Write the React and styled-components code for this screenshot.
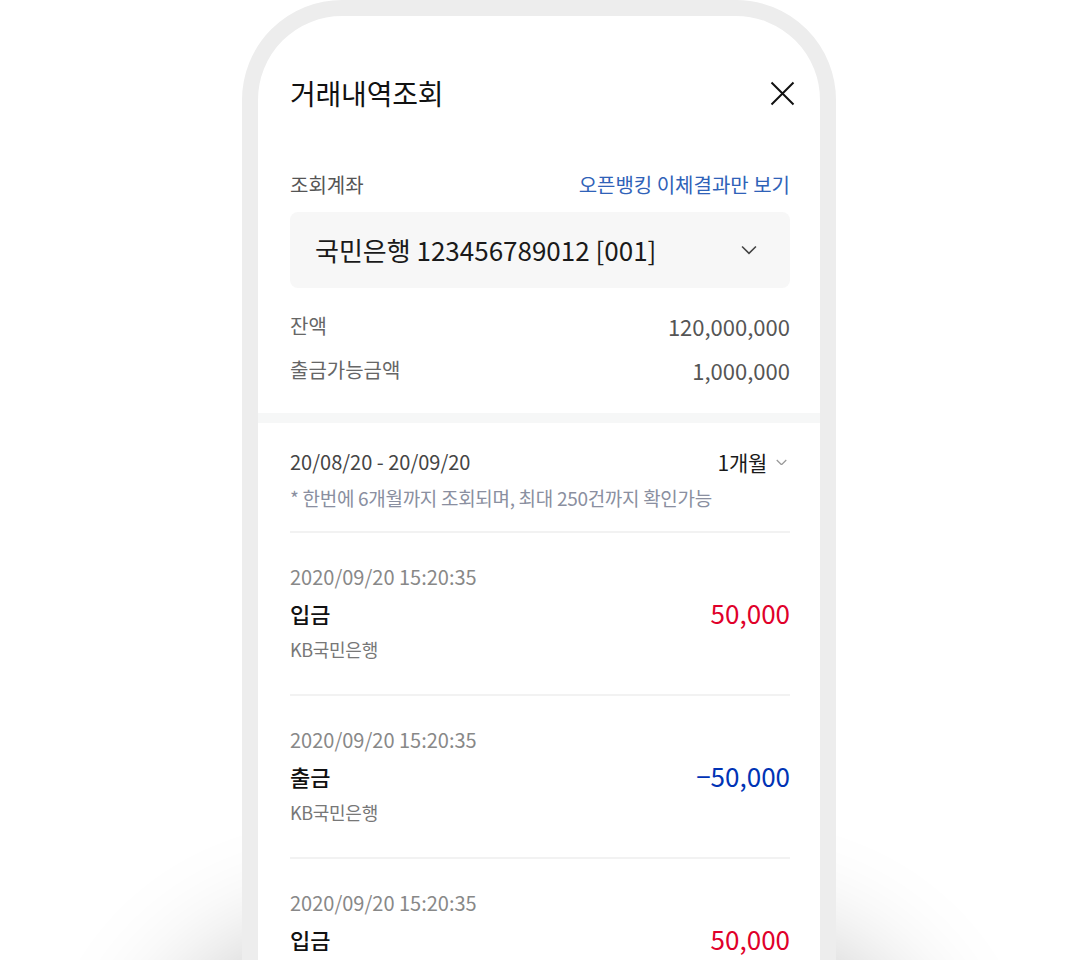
import React from "react";
import styled, { createGlobalStyle } from "styled-components";

const GlobalStyle = createGlobalStyle`
  html, body {
    margin: 0;
    padding: 0;
    height: 960px;
    overflow: hidden;
    background: #ffffff;
    font-family: "Noto Sans CJK KR", "Noto Sans", sans-serif;
  }
`;

const Page = styled.div`
  width: 1080px;
  height: 960px;
  overflow: hidden;
  display: flex;
  padding-left: 242px;
  box-sizing: border-box;
`;

const Phone = styled.div`
  width: 594px;
  height: 1300px;
  flex-shrink: 0;
  box-sizing: border-box;
  border: 16px solid #ededed;
  border-radius: 100px;
  background: #ffffff;
  overflow: hidden;
  box-shadow: 0 1030px 120px 95px rgba(0, 0, 0, 0.24);
`;

const Header = styled.div`
  display: flex;
  align-items: center;
  justify-content: space-between;
  padding: 58px 24px 0 32px;
  height: 38px;
`;

const Title = styled.h1`
  margin: 0;
  font-size: 28px;
  font-weight: 400;
  letter-spacing: -0.2px;
  line-height: 38px;
  color: #111;
`;

const CloseButton = styled.button`
  border: none;
  background: none;
  padding: 0;
  width: 28px;
  height: 28px;
  display: flex;
  align-items: center;
  justify-content: center;
`;

const Section = styled.div`
  padding: ${(p) => p.$pad || "0"};
  padding-left: 32px;
  padding-right: 30px;
`;

const LabelRow = styled.div`
  display: flex;
  justify-content: space-between;
  align-items: center;
  line-height: 28px;
`;

const Label = styled.span`
  font-size: 20px;
  color: #555;
`;

const LinkText = styled.a`
  font-size: 20px;
  color: #2f62b8;
  text-decoration: none;
`;

const Select = styled.div`
  margin-top: 13px;
  height: 76px;
  border-radius: 8px;
  background: #f7f7f7;
  display: flex;
  align-items: center;
  justify-content: space-between;
  padding: 0 33px 0 25px;
`;

const SelectText = styled.span`
  font-size: 26px;
  color: #1a1a1a;
  margin-top: -1px;
`;

const Balance = styled.div`
  margin-top: 20px;
  display: flex;
  flex-direction: column;
  gap: 8px;
`;

const BalanceRow = styled.div`
  display: flex;
  justify-content: space-between;
  align-items: center;
  line-height: 36px;
  font-size: 20px;
  color: #666;
`;

const BalanceValue = styled.span`
  font-size: 22px;
  color: #555;
`;

const Band = styled.div`
  height: 10px;
  background: #f6f7f7;
  margin-top: 25px;
`;

const PeriodRow = styled.div`
  display: flex;
  justify-content: space-between;
  align-items: center;
  line-height: 30px;
`;

const PeriodText = styled.span`
  font-size: 20px;
  color: #444;
`;

const PeriodPicker = styled.span`
  display: flex;
  align-items: center;
  gap: 9px;
  margin-right: 3px;
  font-size: 21px;
  color: #1a1a1a;
  letter-spacing: -0.3px;
`;

const Note = styled.div`
  margin-top: 6px;
  line-height: 30px;
  font-size: 19px;
  color: #8a8fa0;
  letter-spacing: -0.3px;
`;

const Divider = styled.div`
  height: 2px;
  background: #f2f2f2;
`;

const Item = styled.div`
  padding: 26px 0 27px;
  display: flex;
  flex-direction: column;
`;

const ItemDate = styled.div`
  line-height: 36px;
  font-size: 20px;
  color: #888;
`;

const ItemMain = styled.div`
  display: flex;
  justify-content: space-between;
  align-items: center;
  line-height: 36px;
`;

const ItemType = styled.span`
  font-size: 22px;
  font-weight: 500;
  color: #111;
`;

const Amount = styled.span`
  font-size: 26px;
  color: ${(p) => (p.$out ? "#0033b5" : "#e0002a")};
`;

const ItemBank = styled.div`
  line-height: 36px;
  font-size: 18px;
  color: #777;
  letter-spacing: -0.3px;
`;

const CloseIcon = () => (
  <svg width="25" height="25" viewBox="0 0 25 25">
    <path d="M1.5 1.5 L23.5 23.5 M23.5 1.5 L1.5 23.5" stroke="#111" strokeWidth="2" fill="none" />
  </svg>
);

const Chevron = ({ size = 16, color = "#333", width = 1.6 }) => (
  <svg width={size} height={size * 0.62} viewBox="0 0 16 10">
    <path d="M1 1.5 L8 8.5 L15 1.5" stroke={color} strokeWidth={width} fill="none" />
  </svg>
);

const transactions = [
  { date: "2020/09/20 15:20:35", type: "입금", amount: "50,000", bank: "KB국민은행" },
  { date: "2020/09/20 15:20:35", type: "출금", amount: "−50,000", bank: "KB국민은행", out: true },
  { date: "2020/09/20 15:20:35", type: "입금", amount: "50,000", bank: "KB국민은행" },
];

const App = () => {
  return (
    <Page>
      <GlobalStyle />
      <Phone>
        <Header>
          <Title>거래내역조회</Title>
          <CloseButton>
            <CloseIcon />
          </CloseButton>
        </Header>

        <Section $pad="59px 0 0">
          <LabelRow>
            <Label>조회계좌</Label>
            <LinkText>오픈뱅킹 이체결과만 보기</LinkText>
          </LabelRow>
          <Select>
            <SelectText>국민은행 123456789012 [001]</SelectText>
            <Chevron size={16} color="#444" width={1.6} />
          </Select>
          <Balance>
            <BalanceRow>
              <span>잔액</span>
              <BalanceValue>120,000,000</BalanceValue>
            </BalanceRow>
            <BalanceRow>
              <span>출금가능금액</span>
              <BalanceValue>1,000,000</BalanceValue>
            </BalanceRow>
          </Balance>
        </Section>

        <Band />

        <Section $pad="24px 0 18px">
          <PeriodRow>
            <PeriodText>20/08/20 - 20/09/20</PeriodText>
            <PeriodPicker>
              1개월
              <Chevron size={11} color="#999" width={1.8} />
            </PeriodPicker>
          </PeriodRow>
          <Note>* 한번에 6개월까지 조회되며, 최대 250건까지 확인가능</Note>
        </Section>

        <Section>
          {transactions.map((t, i) => (
            <React.Fragment key={i}>
              <Divider />
              <Item>
                <ItemDate>{t.date}</ItemDate>
                <ItemMain>
                  <ItemType>{t.type}</ItemType>
                  <Amount $out={t.out}>{t.amount}</Amount>
                </ItemMain>
                <ItemBank>{t.bank}</ItemBank>
              </Item>
            </React.Fragment>
          ))}
        </Section>
      </Phone>
    </Page>
  );
};

export default App;
